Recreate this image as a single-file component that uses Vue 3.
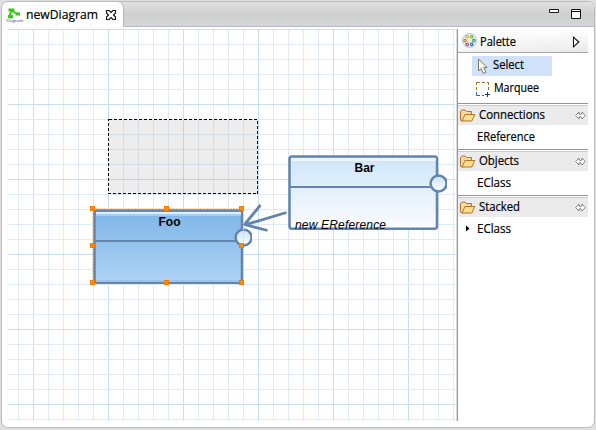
<script setup>
const range = (start, end, step) => {
  const out = []
  for (let v = start; v < end; v += step) out.push(v)
  return out
}
const columns = range(18, 455, 15)
const rows = range(29, 421, 15)
const majorColumn = (x) => (x - 33) % 75 === 0
const majorRow = (y) => (y - 29) % 75 === 0
const handles = [[92.5, 208.5], [166.5, 208.5], [241.5, 208.5], [92.5, 245.5], [241.5, 245.5], [92.5, 282.5], [166.5, 282.5], [241.5, 282.5]]
const groups = [
  { title: 'Connections', item: 'EReference', width: 66, itemWidth: 58 },
  { title: 'Objects', item: 'EClass', width: 40, itemWidth: 34 },
  { title: 'Stacked', item: 'EClass', width: 41, itemWidth: 34, stacked: true }
]
const dots = [[5.2, 3.8, '#f0a020'], [9.6, 3.8, '#83b51c'], [3, 7.6, '#e87800'], [11.8, 7.6, '#46a52b'], [5.2, 11.4, '#d83c48'], [9.7, 11.4, '#2870c8']]
</script>

<template>
  <div class="window">
    <header class="tabbar">
      <div class="tab">
        <svg class="diagram-icon" width="20" height="20" viewBox="0 0 20 20">
          <path d="M4.5 3.5 L12 7 M5.5 3 L3.5 9" stroke="#3cc41c" stroke-width="1.8" fill="none" />
          <path d="M2.5 1.5h6v3h-6zM9.5 5.5h4.5v3H9.5z" fill="#3bc41f" />
          <ellipse cx="4.5" cy="9.5" rx="2.8" ry="2" fill="#3bc41f" />
          <text x=".3" y="15" font-size="4.3" fill="#36368c">Diagram</text>
        </svg>
        <svg class="tab-title" width="76" height="20"><text x="0" y="14" textLength="72" lengthAdjust="spacingAndGlyphs">newDiagram</text></svg>
        <svg class="close" width="12" height="12" viewBox="0 0 12 12">
          <path d="M1.5 1.5H4L6 3.5L8 1.5H10.5V4L8.5 6L10.5 8V10.5H8L6 8.5L4 10.5H1.5V8L3.5 6L1.5 4Z" fill="#fff" stroke="#111" stroke-width="1.15" />
        </svg>
      </div>
      <div class="controls">
        <svg width="33" height="12" viewBox="0 0 33 12">
          <path d="M.5 .5h9v3h-9zM22.5 .5h9v9h-9zM22.5 2.5h9" fill="#fff" stroke="#151515" />
        </svg>
      </div>
    </header>
    <main class="body">
      <svg class="canvas" width="447" height="392" viewBox="8 29 447 392">
        <defs>
          <linearGradient id="foo" x1="0" y1="0" x2="0" y2="1">
            <stop offset="0" stop-color="#7eb5e8" /><stop offset="1" stop-color="#afd2f5" />
          </linearGradient>
          <linearGradient id="bar" x1="0" y1="0" x2="0" y2="1">
            <stop offset="0" stop-color="#cee5f9" /><stop offset="1" stop-color="#fbfcfe" />
          </linearGradient>
          <linearGradient id="port" x1="0" y1="0" x2="0" y2="1">
            <stop offset="0" stop-color="#cde3f6" /><stop offset="1" stop-color="#fafcff" />
          </linearGradient>
          <clipPath id="ports"><path d="M230 225H252V250H230ZM425 170H447V196H425Z" /></clipPath>
        </defs>
        <g shape-rendering="crispEdges">
          <rect v-for="x in columns" :key="'c' + x" :x="x" y="29" width="1" height="392" :fill="majorColumn(x) ? '#cadef1' : '#e0ebf8'" />
          <rect v-for="y in rows" :key="'r' + y" x="8" :y="y" width="447" height="1" :fill="majorRow(y) ? '#cadef1' : '#e0ebf8'" />
          <rect x="108" y="119" width="150" height="75" fill="#a0a0a0" fill-opacity=".19" />
          <rect x="108.5" y="119.5" width="149" height="74" fill="none" stroke="#e2e6eb" />
          <rect x="108.5" y="119.5" width="149" height="74" fill="none" stroke="#000" stroke-dasharray="3 2" />
        </g>

        <rect x="289.5" y="156.5" width="147.5" height="72.3" rx="2.5" fill="url(#bar)" stroke="#6284ad" stroke-width="2.5" />
        <rect x="291" y="158" width="145" height="3" fill="#e9f4fd" />
        <path d="M290 187H437" stroke="#6284ad" stroke-width="2" />
        <text class="name" x="364.5" y="172" text-anchor="middle">Bar</text>
        <circle cx="438.6" cy="183.5" r="8" fill="url(#port)" stroke="#6284ad" stroke-width="2.5" clip-path="url(#ports)" />
        <text class="label" x="295" y="229" textLength="91">new EReference</text>

        <rect x="94.5" y="210.5" width="147.5" height="72.3" rx="2.5" fill="url(#foo)" stroke="#6284ad" stroke-width="2.5" />
        <rect x="96" y="212" width="145" height="2" fill="#e1effc" />
        <rect x="96" y="214" width="145" height="2" fill="#a4cdf1" />
        <rect x="96" y="280" width="145" height="2" fill="#9dc4e5" />
        <path d="M95 241H242" stroke="#6284ad" stroke-width="2" />
        <text class="name" x="169.5" y="226" text-anchor="middle">Foo</text>
        <circle cx="243.6" cy="237.5" r="8" fill="url(#port)" stroke="#6284ad" stroke-width="2.5" clip-path="url(#ports)" />
        <path d="M286.5 212.5L244.5 225M260.5 205L244.5 224.5L267.5 230.5" fill="none" stroke="#6284ad" stroke-width="2.8" />
        <path d="M92.5 284V208.5H243.5V284" fill="none" stroke="#ffcf9e" stroke-dasharray="2 1" />
        <rect v-for="([x, y], i) in handles" :key="i" :x="x - 2" :y="y - 2" width="4" height="4" fill="#ff8c0a" stroke="#f57b00" />
      </svg>

      <aside class="palette">
        <div class="palette-head">
          <svg class="head-icon" width="15" height="15" viewBox="0 0 15 15">
            <circle cx="7.5" cy="7.5" r="7" fill="#d9edfa" stroke="#a9c9df" />
            <circle v-for="([x, y, color], i) in dots" :key="i" :cx="x" :cy="y" r="1.2" fill="#fff" :stroke="color" stroke-width="1.2" />
          </svg>
          <svg class="head-text" width="42" height="18"><text x="0" y="13" textLength="36" lengthAdjust="spacingAndGlyphs">Palette</text></svg>
          <svg class="expand" width="8" height="12" viewBox="0 0 8 12"><path d="M1.5 1.2L6.8 6L1.5 10.8Z" fill="#fff" stroke="#111" stroke-width="1.1" /></svg>
        </div>
        <div class="tools">
          <div class="tool selected">
            <svg class="cursor" width="12" height="17" viewBox="0 0 12 17">
              <path d="M1.5 1V13L4 10.5L6.4 15.5L9 14.2L6.8 9.5H10Z" fill="#fffce9" stroke="#7c7868" />
            </svg>
            <svg width="36" height="18"><text x="0" y="13" textLength="31" lengthAdjust="spacingAndGlyphs">Select</text></svg>
          </div>
          <div class="tool marquee">
            <svg class="frame" width="15" height="16" viewBox="0 0 15 16" fill="none">
              <path d="M.5 4V1.5H4M6 1.5H9M11 1.5H12.5V4M.5 6V9M12.5 6V9" stroke="#8b762d" />
              <path d="M.5 11V14.5H4M6 14.5H8" stroke="#2d6699" />
              <path d="M11.5 11V16M9 13.5H14" stroke="#173e6d" />
            </svg>
            <svg width="50" height="18"><text x="0" y="13" textLength="45" lengthAdjust="spacingAndGlyphs">Marquee</text></svg>
          </div>
        </div>
        <section v-for="group in groups" :key="group.title" class="group">
          <div class="group-head">
            <svg class="folder" width="16" height="13" viewBox="0 0 16 13" stroke="#b4732a">
              <path d="M.5 11V2.5L2 1H5L6.5 2.5H11.5V5.5L3 12H1.5Z" fill="#f5d89b" />
              <path d="M2 12L5 5.5H14.8L11.8 12Z" fill="#ffdf8f" />
            </svg>
            <svg width="72" height="18"><text x="0" y="13" :textLength="group.width" lengthAdjust="spacingAndGlyphs">{{ group.title }}</text></svg>
            <svg class="pin" width="11" height="9" viewBox="0 0 11 9" fill="#fff" stroke="#777" stroke-width=".9">
              <path d="M4 1L.7 4.5L4 8V6H5L5.5 5.3L6 6L7 8L10.3 4.5L7 1V3H6L5.5 3.7L5 3H4Z" />
            </svg>
          </div>
          <div class="group-item">
            <svg class="marker" width="18" height="18"><path v-if="group.stacked" d="M7 6.5L10.5 9.5L7 12.5Z" fill="#000" /></svg>
            <svg width="72" height="18"><text x="0" y="14" :textLength="group.itemWidth" lengthAdjust="spacingAndGlyphs">{{ group.item }}</text></svg>
          </div>
        </section>
      </aside>
    </main>
  </div>
</template>

<style>
html { background: #dfdfdf; }
</style>

<style scoped>
* { box-sizing: border-box; }
svg { display: block; flex: none; }
.window {
  width: 594px;
  height: 427px;
  margin: 1px 1px 2px;
  border: 1px solid #bcbcbc;
  border-radius: 7px;
  background: #fff;
  overflow: hidden;
  font: 12px "Open Sans", "Noto Sans", sans-serif;
  color: #000;
}
.tabbar text, .palette text { stroke: #000; stroke-width: .2px; }
.tabbar .diagram-icon text { stroke: none; }
.tabbar {
  height: 25px;
  display: flex;
  justify-content: space-between;
  background: linear-gradient(#e0e0e0, #cfcfcf 55%, #d6d6d6);
  border-bottom: 1px solid #b5b9ca;
}
.tab {
  width: 122px;
  height: 25px;
  display: flex;
  background: #fff;
  border-right: 1px solid #aeb3c7;
  border-radius: 6px 6px 0 0;
  padding-left: 4px;
}
.diagram-icon { margin-top: 5px; }
.tab-title { margin: 3px 0 0; }
.close { margin: 7px 0 0 3px; }
.controls { padding: 7px 12px 0 0; }
.body { height: 400px; display: flex; padding: 2px 6px 0; }
.palette {
  width: 131px;
  height: 392px;
  margin-left: 2px;
  border-left: 1px solid #999;
  box-shadow: -1px 0 #dcdcdc;
}
.palette-head {
  height: 24px;
  display: flex;
  padding-left: 4px;
  background: linear-gradient(90deg, #fff8, transparent), linear-gradient(#fff, #e9e9e9);
  border-bottom: 1px solid #a4a4a4;
}
.head-icon { margin-top: 4px; }
.head-text { margin: 4px 0 0 3px; }
.expand { margin: 7px 0 0 50px; }
.tools { height: 50px; padding: 3px 0 0 14px; }
.tool { display: flex; height: 20px; }
.tool.selected { width: 80px; padding-left: 5px; background: #cfe2f9; border-radius: 1px; }
.cursor { margin: 2px 4px 0 0; }
.marquee { margin-top: 3px; padding-left: 4px; }
.frame { margin: 2px 3px 0 0; }
.group { height: 46px; border-top: 1px solid #959595; padding-top: 1px; }
.group-head { height: 20px; display: flex; border-top: 1px solid #ccc; background: #ebebeb; padding-left: 2px; }
.folder { margin: 3px 3px 0 0; }
.pin { margin: 5px 0 0 24px; }
.group-item { display: flex; padding: 2px 0 0 1px; }
.name { font: bold 12px "Liberation Sans", sans-serif; }
.label { font: italic 12px "Liberation Sans", sans-serif; }
</style>
